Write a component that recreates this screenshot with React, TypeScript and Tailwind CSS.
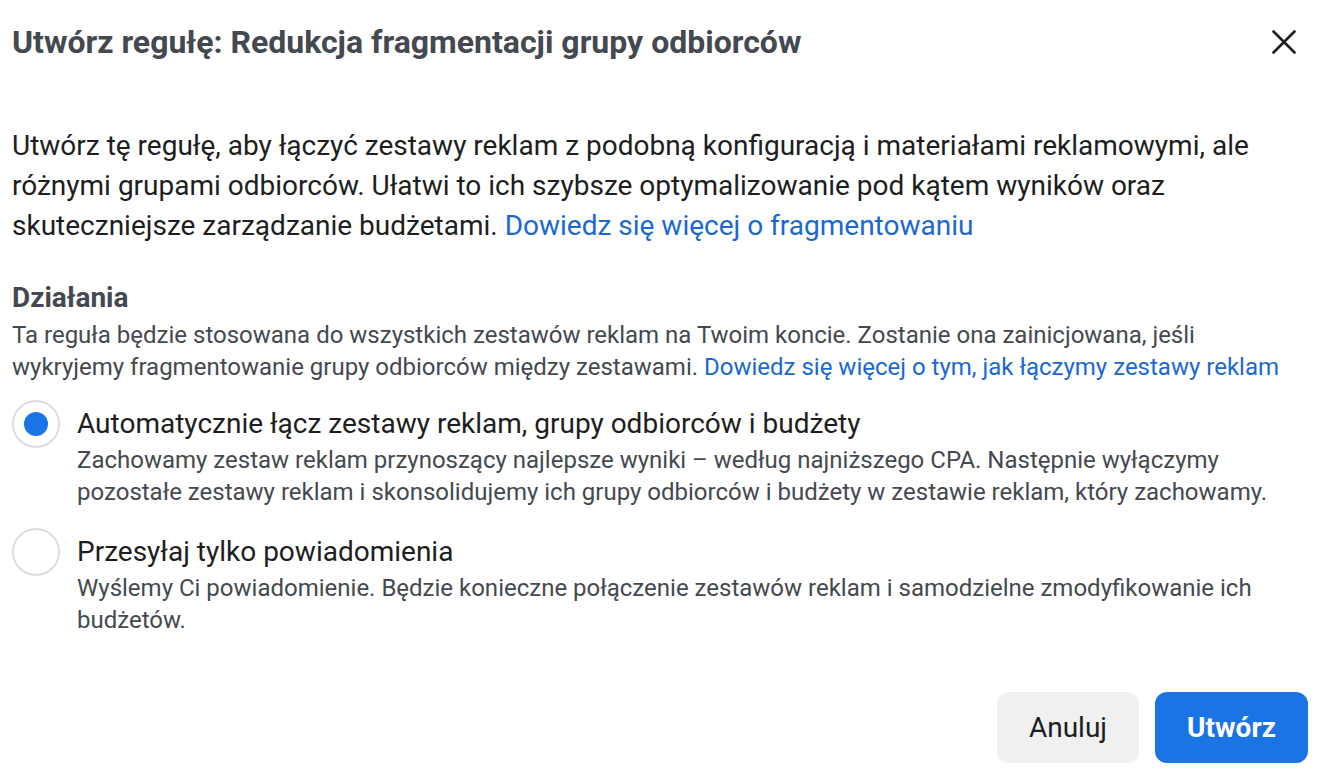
const font = { fontFamily: "Roboto, 'Liberation Sans', sans-serif" };

type OptionProps = {
  checked?: boolean;
  label: string;
  children: React.ReactNode;
};

function RadioOption({ checked, label, children }: OptionProps) {
  return (
    <div className="flex gap-[17px]">
      <div className="flex h-[48px] w-[48px] shrink-0 items-center justify-center rounded-full border-2 border-[#dadde1] bg-white">
        {checked && <div className="h-[24px] w-[24px] rounded-full bg-[#1b74e4]" />}
      </div>
      <div className="pt-[4px]">
        <p className="text-[28px] leading-[40px] text-[#1c1e21]">{label}</p>
        <p className="text-[24px] leading-[32px] text-[#444950]">{children}</p>
      </div>
    </div>
  );
}

export default function App() {
  return (
    <div className="min-h-screen w-[1336px] bg-white" style={font}>
      <div className="flex h-[84px] items-center justify-between pl-[12px] pr-[40px]">
        <h1 className="text-[32px] font-bold text-[#444950]">
          Utwórz regułę: Redukcja fragmentacji grupy odbiorców
        </h1>
        <button className="text-[#1c1e21]">
          <svg width="24" height="24" viewBox="0 0 24 24" fill="none" stroke="currentColor" strokeWidth="2.6" strokeLinecap="round">
            <path d="M1.5 1.5 L22.5 22.5 M22.5 1.5 L1.5 22.5" />
          </svg>
        </button>
      </div>

      <div className="pl-[12px] pr-[28px]">
        <div className="max-w-[1272px]">
          <p className="mt-[42px] text-[28px] leading-[40px] text-[#1c1e21]">
            Utwórz tę regułę, aby łączyć zestawy reklam z podobną konfiguracją i materiałami reklamowymi, ale
            różnymi grupami odbiorców. Ułatwi to ich szybsze optymalizowanie pod kątem wyników oraz
            skuteczniejsze zarządzanie budżetami.{" "}
            <a className="text-[#1b68d4]">Dowiedz się więcej o fragmentowaniu</a>
          </p>

          <h2 className="mt-[36px] text-[28px] font-bold leading-[32px] text-[#444950]">Działania</h2>
          <p className="mt-[5px] text-[24px] leading-[32px] text-[#444950]">
            Ta reguła będzie stosowana do wszystkich zestawów reklam na Twoim koncie. Zostanie ona zainicjowana, jeśli
            wykryjemy fragmentowanie grupy odbiorców między zestawami.{" "}
            <a className="text-[#1b68d4]">Dowiedz się więcej o tym, jak łączymy zestawy reklam</a>
          </p>

          <div className="mt-[17px] flex flex-col gap-[20px]">
            <RadioOption checked label="Automatycznie łącz zestawy reklam, grupy odbiorców i budżety">
              Zachowamy zestaw reklam przynoszący najlepsze wyniki – według najniższego CPA. Następnie wyłączymy
              pozostałe zestawy reklam i skonsolidujemy ich grupy odbiorców i budżety w zestawie reklam, który zachowamy.
            </RadioOption>
            <RadioOption label="Przesyłaj tylko powiadomienia">
              Wyślemy Ci powiadomienie. Będzie konieczne połączenie zestawów reklam i samodzielne zmodyfikowanie ich
              budżetów.
            </RadioOption>
          </div>
        </div>

        <div className="mt-[56px] flex justify-end gap-[16px]">
          <button className="h-[71px] w-[142px] rounded-[12px] bg-[#f0f0f0] text-[28px] text-[#1c1e21]">
            Anuluj
          </button>
          <button className="h-[71px] w-[153px] rounded-[12px] bg-[#1b74e4] text-[28px] font-bold text-white">
            Utwórz
          </button>
        </div>
      </div>
    </div>
  );
}
